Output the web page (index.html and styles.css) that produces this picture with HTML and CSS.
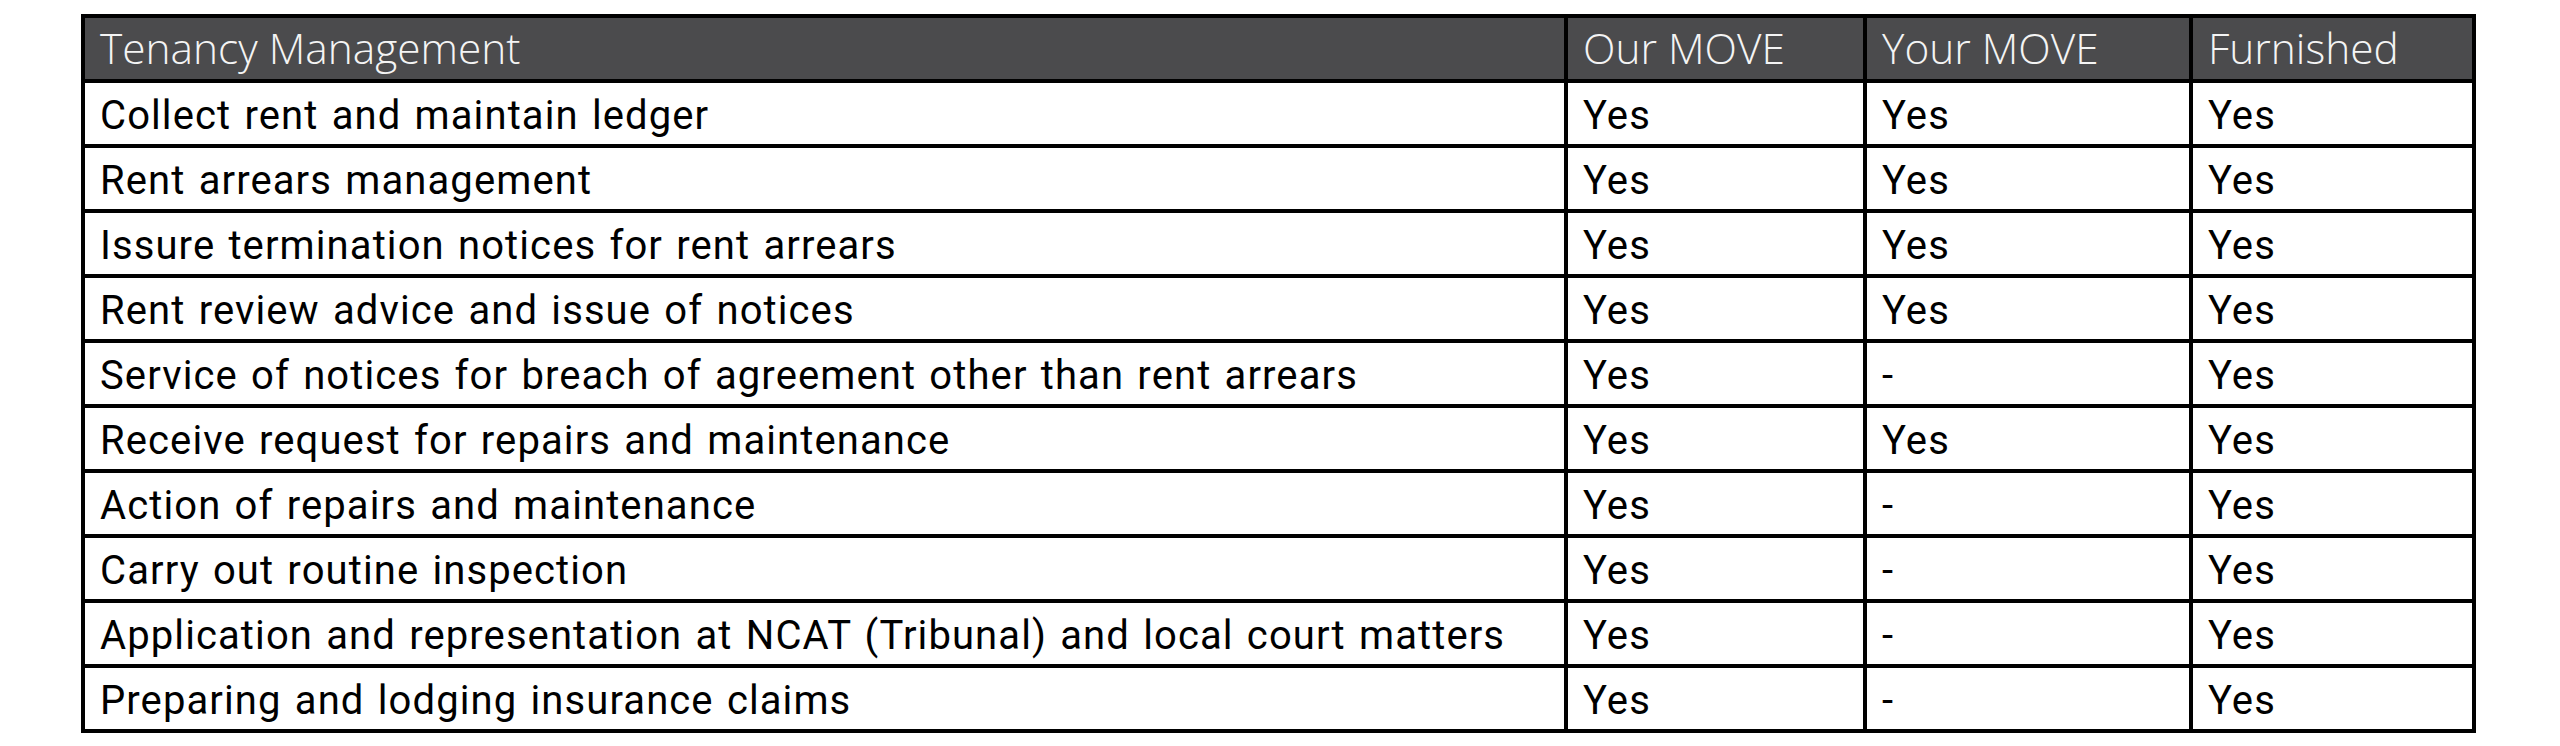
FILE: index.html
```html
<!DOCTYPE html>
<html>
<head>
<meta charset="utf-8">
<link rel="stylesheet" href="styles.css">
</head>
<body>
<table class="grid">
  <colgroup>
    <col class="c-feature">
    <col class="c-our">
    <col class="c-your">
    <col class="c-furn">
  </colgroup>
  <thead>
    <tr>
      <th>Tenancy Management</th>
      <th>Our MOVE</th>
      <th>Your MOVE</th>
      <th>Furnished</th>
    </tr>
  </thead>
  <tbody>
    <tr><td>Collect rent and maintain ledger</td><td>Yes</td><td>Yes</td><td>Yes</td></tr>
    <tr><td>Rent arrears management</td><td>Yes</td><td>Yes</td><td>Yes</td></tr>
    <tr><td>Issure termination notices for rent arrears</td><td>Yes</td><td>Yes</td><td>Yes</td></tr>
    <tr><td>Rent review advice and issue of notices</td><td>Yes</td><td>Yes</td><td>Yes</td></tr>
    <tr><td>Service of notices for breach of agreement other than rent arrears</td><td>Yes</td><td>-</td><td>Yes</td></tr>
    <tr><td>Receive request for repairs and maintenance</td><td>Yes</td><td>Yes</td><td>Yes</td></tr>
    <tr><td>Action of repairs and maintenance</td><td>Yes</td><td>-</td><td>Yes</td></tr>
    <tr><td>Carry out routine inspection</td><td>Yes</td><td>-</td><td>Yes</td></tr>
    <tr><td>Application and representation at NCAT (Tribunal) and local court matters</td><td>Yes</td><td>-</td><td>Yes</td></tr>
    <tr><td>Preparing and lodging insurance claims</td><td>Yes</td><td>-</td><td>Yes</td></tr>
  </tbody>
</table>
</body>
</html>
```
FILE: styles.css
```css
html, body {
  margin: 0;
  padding: 0;
  background: #ffffff;
}
body {
  padding: 14px 0 0 81px;
}
.grid {
  border-collapse: collapse;
  table-layout: fixed;
  width: 2395px;
  font-family: Roboto, "Liberation Sans", sans-serif;
}
.c-feature { width: 1483px; }
.c-our { width: 299px; }
.c-your { width: 326px; }
.c-furn { width: 283px; }
.grid th,
.grid td {
  border: 4px solid #000;
  padding: 0 0 0 15px;
  text-align: left;
  vertical-align: middle;
  white-space: nowrap;
  overflow: hidden;
}
.grid th {
  height: 61px;
  background: #4b4b4d;
  color: #f4f4f4;
  font-family: "Open Sans", sans-serif;
  font-weight: 300;
  font-size: 42.4px;
  line-height: 1;
}
.grid td {
  height: 57px;
  color: #000;
  font-size: 40px;
  font-weight: 400;
  letter-spacing: 1.1px;
  word-spacing: 2.2px;
  line-height: 1;
  padding-top: 4px;
}
```
